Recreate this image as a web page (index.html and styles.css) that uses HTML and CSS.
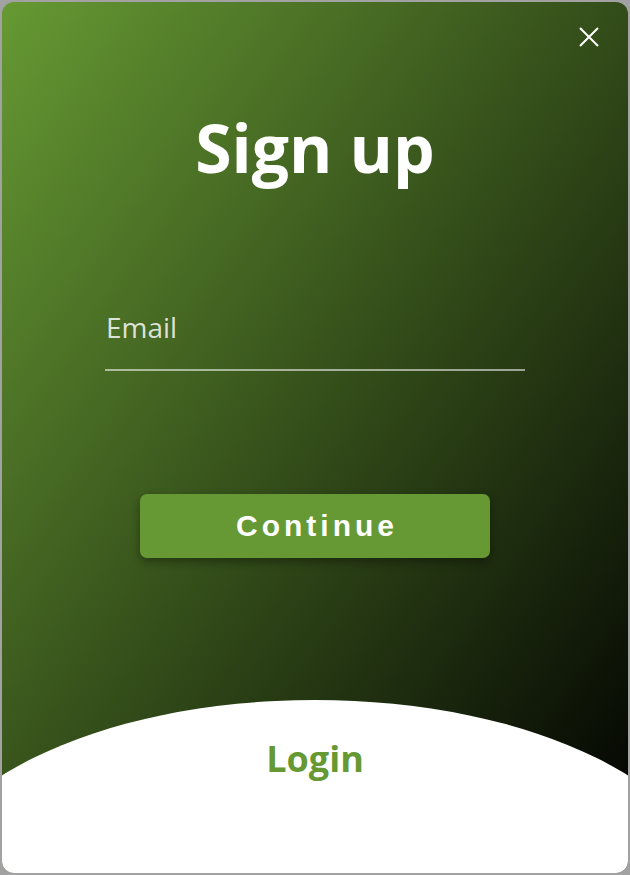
FILE: index.html
```html
<!DOCTYPE html>
<html lang="en">
<head>
<meta charset="utf-8">
<title>Sign up</title>
<link rel="stylesheet" href="styles.css">
</head>
<body>
<div class="card">
  <button class="close" aria-label="Close">
    <svg width="20" height="20" viewBox="0 0 20 20"><path d="M1 1 L19 19 M19 1 L1 19" stroke="#fff" stroke-width="2" fill="none"/></svg>
  </button>
  <h1 class="title">Sign up</h1>
  <div class="field">
    <label class="field-label">Email</label>
  </div>
  <button class="continue">Continue</button>
  <div class="bottom">
    <span class="login">Login</span>
  </div>
</div>
</body>
</html>
```
FILE: styles.css
```css
html, body {
  margin: 0;
  padding: 0;
}
body {
  background: #a2a2a2;
  width: 630px;
  height: 875px;
  padding: 2px;
  box-sizing: border-box;
}
.card {
  position: relative;
  width: 626px;
  height: 871px;
  border-radius: 12px;
  overflow: hidden;
  background: linear-gradient(to bottom right, #669933 0%, #000000 100%);
  display: flex;
  flex-direction: column;
  align-items: center;
  font-family: "Open Sans", "Noto Sans", sans-serif;
}
.close {
  position: absolute;
  top: 25px;
  right: 29px;
  width: 20px;
  height: 20px;
  padding: 0;
  border: 0;
  background: none;
  display: flex;
}
.title {
  margin: 105px 0 0;
  font-size: 66px;
  line-height: 80px;
  font-weight: 700;
  color: #fff;
}
.field {
  margin-top: 120px;
  width: 420px;
  height: 62px;
  border-bottom: 2px solid rgba(255,255,255,0.55);
}
.field-label {
  display: block;
  font-size: 28px;
  line-height: 40px;
  padding-left: 1px;
  color: rgba(255,255,255,0.82);
}
.continue {
  margin-top: 123px;
  width: 350px;
  height: 64px;
  padding: 0 0 0 4px;
  border: 0;
  border-radius: 7px;
  background: #669933;
  color: #fff;
  font-family: "Liberation Sans", Arial, sans-serif;
  font-weight: 700;
  font-size: 30px;
  letter-spacing: 4px;
  box-shadow: 0 4px 10px rgba(0,0,0,0.35);
}
.bottom {
  margin-top: auto;
  position: relative;
  width: 100%;
  height: 173px;
  display: flex;
  justify-content: center;
}
.bottom::before {
  content: "";
  position: absolute;
  left: -87px;
  top: 0;
  width: 800px;
  height: 400px;
  border-radius: 50%;
  background: #fff;
}
.login {
  position: relative;
  margin-top: 35px;
  font-size: 36px;
  line-height: 48px;
  font-weight: 700;
  color: #669933;
}
```
